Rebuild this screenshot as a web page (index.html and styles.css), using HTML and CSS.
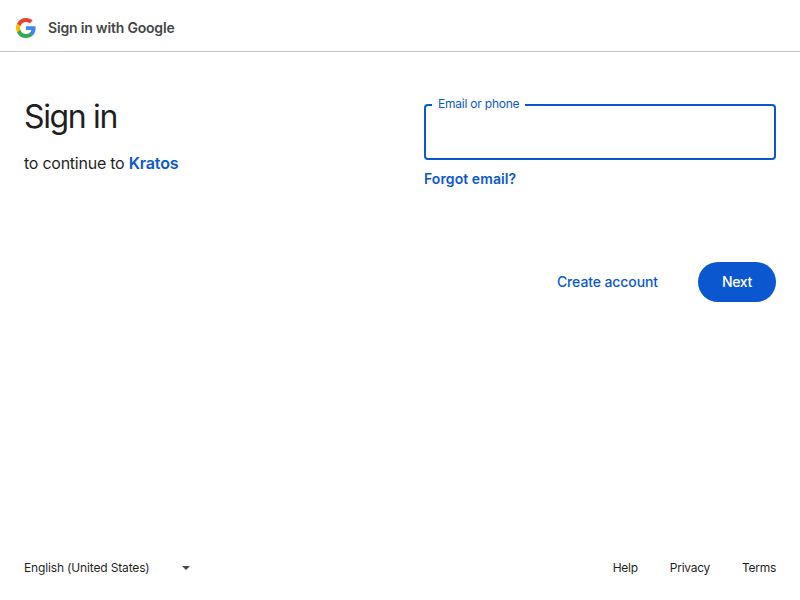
FILE: index.html
```html
<!DOCTYPE html>
<html lang="en">
<head>
<meta charset="utf-8">
<title>Sign in</title>
<link rel="stylesheet" href="styles.css">
</head>
<body>
<header class="topbar">
  <svg class="logo" viewBox="0 0 40 40" aria-hidden="true">
    <path fill="#4285f4" d="M39.2 20.45c0-1.41-.13-2.77-.36-4.09H20v7.74h10.77a9.2 9.2 0 0 1-4 6.03v5.02h6.46c3.78-3.48 5.97-8.61 5.97-14.7z"/>
    <path fill="#34a853" d="M20 40c5.4 0 9.92-1.79 13.23-4.84l-6.46-5.02c-1.79 1.2-4.08 1.91-6.77 1.91-5.21 0-9.62-3.52-11.19-8.25H2.13v5.18A20 20 0 0 0 20 40z"/>
    <path fill="#fbbc04" d="M8.81 23.8A12 12 0 0 1 8.18 20c0-1.32.23-2.6.63-3.8v-5.18H2.13A20 20 0 0 0 0 20c0 3.23.77 6.28 2.13 8.98z"/>
    <path fill="#ea4335" d="M20 7.95c2.94 0 5.57 1.01 7.65 2.99l5.73-5.73C29.91 1.98 25.39 0 20 0A20 20 0 0 0 2.13 11.02l6.68 5.18C10.38 11.47 14.79 7.95 20 7.95z"/>
  </svg>
  <span class="brand">Sign in with Google</span>
</header>
<main class="content">
  <section class="intro">
    <h1 class="title">Sign in</h1>
    <p class="subtitle"><span class="lead">to continue to</span> <a class="app">Kratos</a></p>
  </section>
  <form class="form">
    <fieldset class="field">
      <legend class="label">Email or phone</legend>
    </fieldset>
    <a class="forgot">Forgot email?</a>
    <div class="actions">
      <a class="create">Create account</a>
      <button class="next" type="button">Next</button>
    </div>
  </form>
</main>
<footer class="footer">
  <div class="language">
    <span class="locale">English (United States)</span>
    <svg class="caret" viewBox="0 0 8 4" aria-hidden="true"><path d="M0 0h8L4 4z"/></svg>
  </div>
  <nav class="links"><a class="help">Help</a><a class="privacy">Privacy</a><a class="terms">Terms</a></nav>
</footer>
</body>
</html>
```
FILE: styles.css
```css
* { box-sizing: border-box; }
body {
  margin: 0;
  height: 600px;
  display: flex;
  flex-direction: column;
  background: #fff;
  color: #1f1f1f;
  font-family: Inter, Roboto, sans-serif;
}
.topbar {
  height: 52px;
  padding: 4px 16px 0;
  display: flex;
  align-items: center;
  gap: 12px;
  border-bottom: 1px solid #c4c7c5;
}
.logo { width: 20px; height: 20px; }
.brand {
  font-size: 14px;
  font-weight: 600;
  letter-spacing: -0.19px;
  color: #444746;
}
.content {
  flex: 1;
  padding: 0 24px;
  display: grid;
  grid-template-columns: 1fr 1fr;
  gap: 48px;
}
.intro { padding-top: 43px; }
.title {
  margin: 0;
  font-size: 32px;
  line-height: 44px;
  font-weight: 400;
  letter-spacing: -1.35px;
}
.subtitle {
  margin: 12px 0 0;
  font-size: 16px;
  line-height: 24px;
  letter-spacing: -0.25px;
}
.app, .forgot, .create { color: #0b57d0; }
.app { font-weight: 600; letter-spacing: -0.15px; }
.form { padding-top: 44px; }
.field {
  height: 64px;
  margin: 0;
  padding: 0 6px;
  border: 2px solid #0b57d0;
  border-radius: 4px;
}
.label {
  padding: 0 6px 2px;
  font-size: 12px;
  line-height: 16px;
  letter-spacing: -0.22px;
  color: #0b57d0;
}
.forgot {
  display: block;
  margin-top: 9px;
  font-size: 14px;
  line-height: 20px;
  font-weight: 600;
  letter-spacing: 0.08px;
}
.actions {
  margin-top: 73px;
  display: flex;
  justify-content: flex-end;
  align-items: center;
  gap: 40px;
  font-size: 14px;
  font-weight: 500;
  letter-spacing: -0.1px;
}
.create { padding-bottom: 2px; }
.next {
  width: 78px;
  height: 40px;
  padding: 0 0 2px;
  border: 0;
  border-radius: 20px;
  background: #0b57d0;
  color: #fff;
  font: inherit;
  letter-spacing: -0.3px;
}
.footer {
  height: 64px;
  padding: 0 24px;
  display: flex;
  align-items: center;
  justify-content: space-between;
  font-size: 12px;
}
.language { display: flex; align-items: center; }
.locale { width: 158px; padding-bottom: 2px; letter-spacing: -0.15px; }
.caret { width: 8px; height: 4px; fill: #444746; }
.links { display: flex; gap: 32px; padding-bottom: 2px; letter-spacing: -0.27px; }
```
